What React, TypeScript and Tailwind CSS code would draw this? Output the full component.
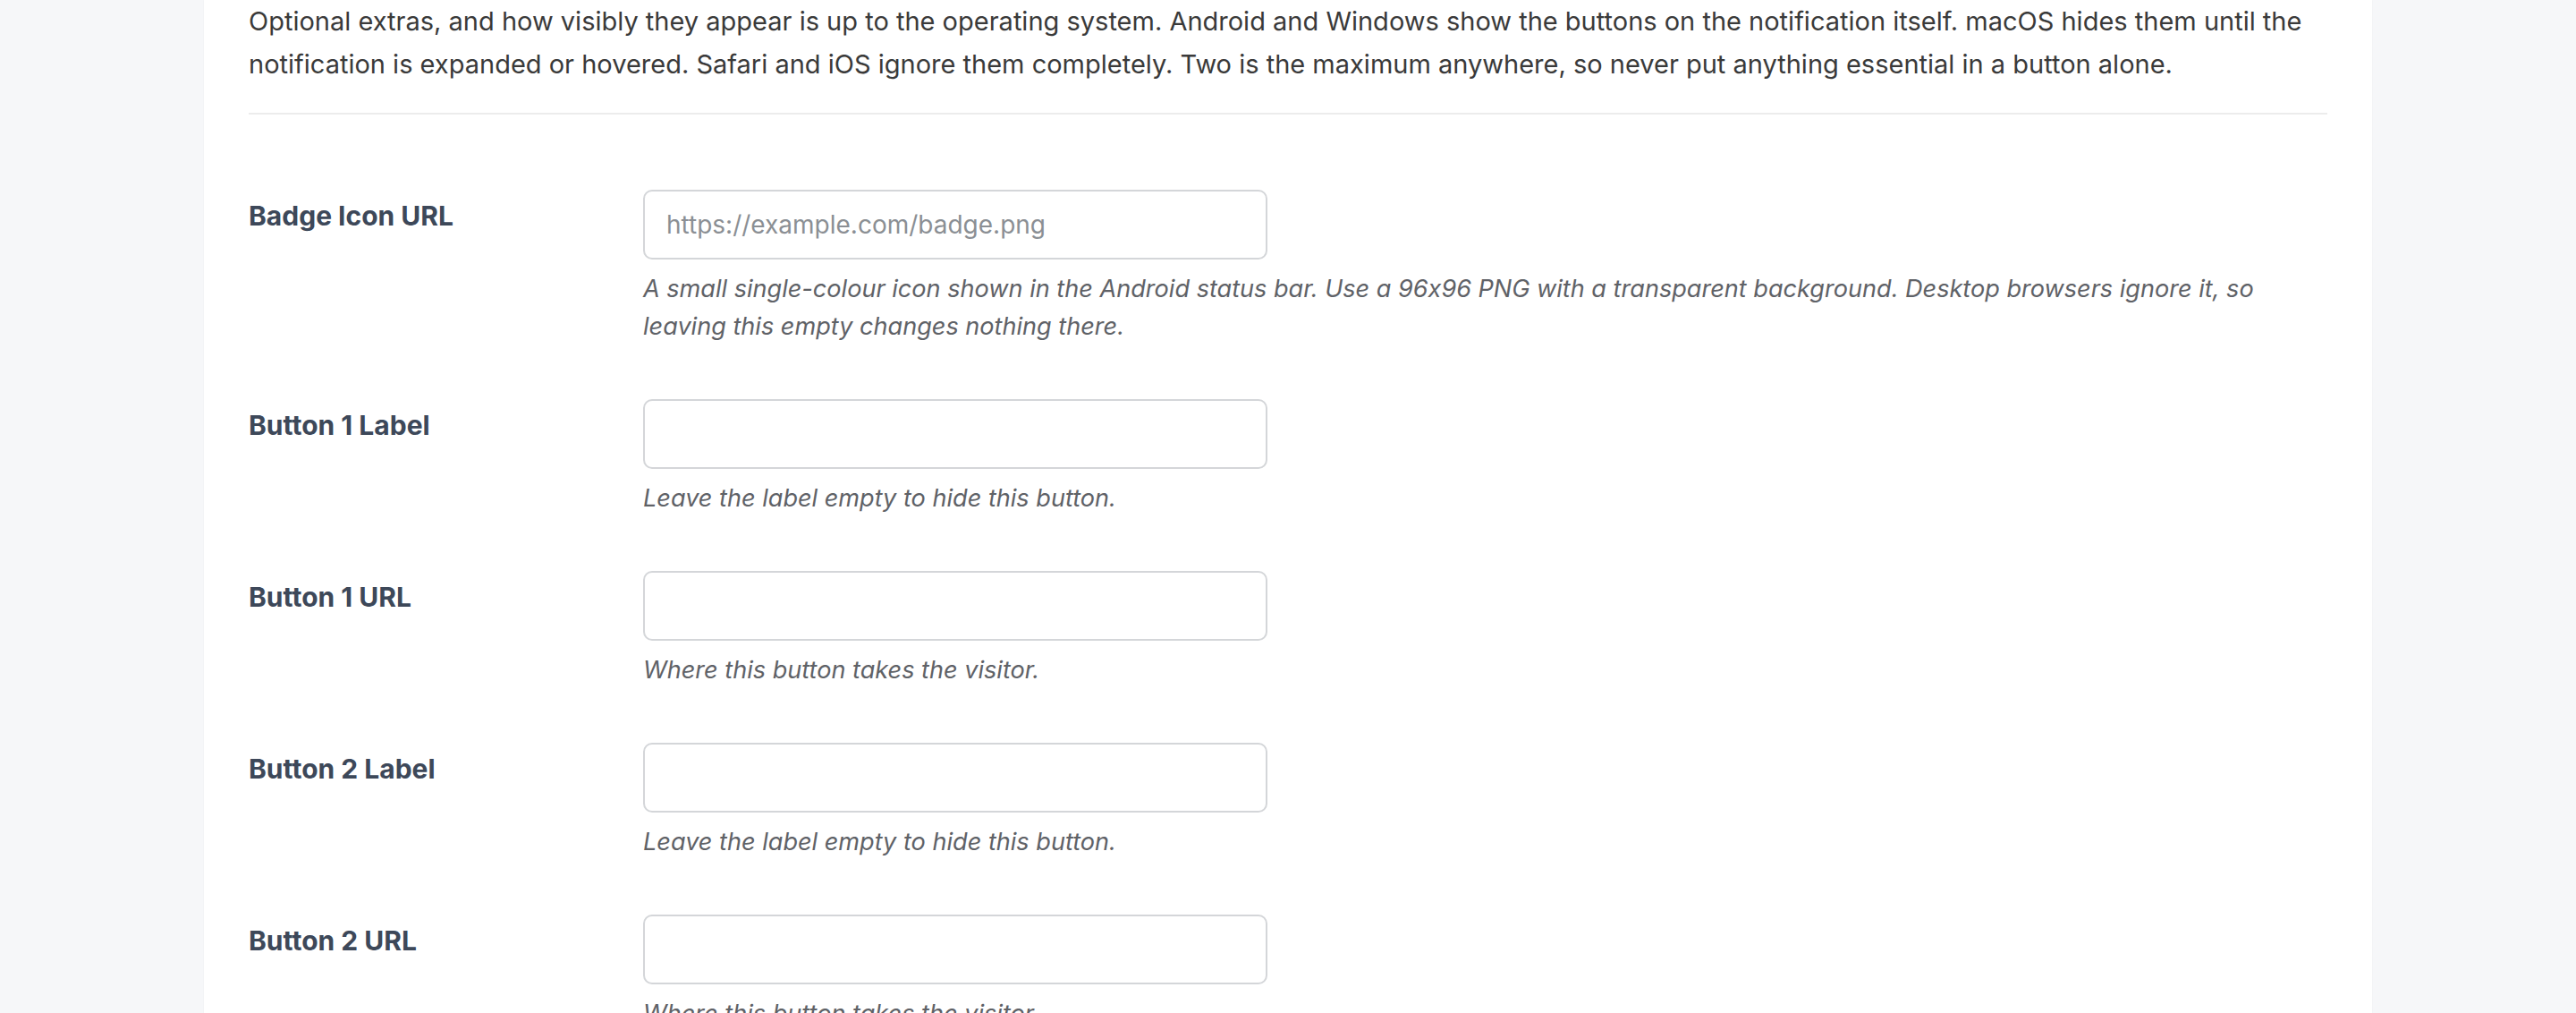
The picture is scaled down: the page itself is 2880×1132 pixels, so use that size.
import React from 'react'

const fields = [
  {
    label: 'Badge Icon URL',
    placeholder: 'https://example.com/badge.png',
    help: 'A small single-colour icon shown in the Android status bar. Use a 96x96 PNG with a transparent background. Desktop browsers ignore it, so leaving this empty changes nothing there.',
  },
  { label: 'Button 1 Label', placeholder: '', help: 'Leave the label empty to hide this button.' },
  { label: 'Button 1 URL', placeholder: '', help: 'Where this button takes the visitor.' },
  { label: 'Button 2 Label', placeholder: '', help: 'Leave the label empty to hide this button.' },
  { label: 'Button 2 URL', placeholder: '', help: 'Where this button takes the visitor.' },
]

const FieldRow = ({ field }: { field: (typeof fields)[number] }) => (
  <div className="flex py-[30px]">
    <label className="w-[441px] shrink-0 pt-[8px] text-[30px] leading-[42px] font-bold text-[#3d4859]">
      {field.label}
    </label>
    <div className="flex-1">
      <input
        type="text"
        placeholder={field.placeholder}
        className="block h-[78px] w-[698px] rounded-[10px] border-2 border-[#d4d6d9] bg-white px-[24px] text-[28px] text-[#333] placeholder:text-[#8b8f94] outline-none"
      />
      <p className="mt-[12px] pr-[40px] text-[27.1px] leading-[42px] italic text-[#5f6267] [font-feature-settings:'calt'_0]">
        {field.help}
      </p>
    </div>
  </div>
)

export default function App() {
  return (
    <main className="min-h-screen bg-[#f6f7f9] font-['Inter',sans-serif]">
      <div className="mx-auto min-h-screen w-[2424px] bg-white px-[50px] shadow-[0_0_2px_rgba(0,0,0,0.04)]">
        {/* Section intro */}
        <p className="text-[29px] leading-[48px] text-[#3a3a3a]">
          Optional extras, and how visibly they appear is up to the operating system. Android and Windows show the
          buttons on the notification itself. macOS hides them until the notification is expanded or hovered. Safari
          and iOS ignore them completely. Two is the maximum anywhere, so never put anything essential in a button alone.
        </p>
        <div className="mt-[30px] h-[2px] bg-[#ececec]" />

        {/* Fields */}
        <div className="mt-[54px]">
          {fields.map((field) => (
            <FieldRow key={field.label} field={field} />
          ))}
        </div>
      </div>
    </main>
  )
}
